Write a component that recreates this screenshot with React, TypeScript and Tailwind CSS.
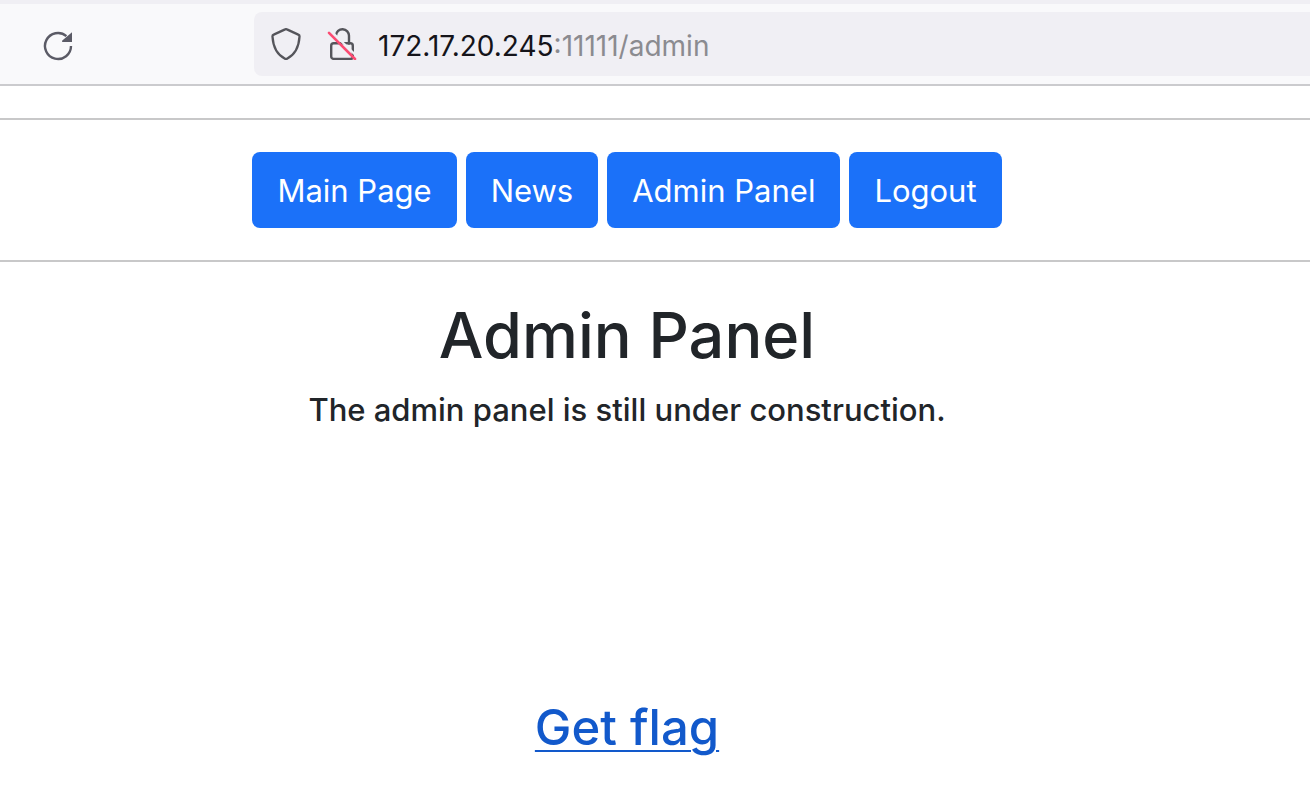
import type { ReactNode } from 'react'

const links = [
  { label: 'Main Page', href: '#main' },
  { label: 'News', href: '#news' },
  { label: 'Admin Panel', href: '#admin' },
  { label: 'Logout', href: '#logout' },
]

function Icon({ children }: { children: ReactNode }) {
  return (
    <svg viewBox="0 0 32 32" className="size-8 shrink-0" fill="none" strokeLinecap="round" strokeLinejoin="round" aria-hidden="true">
      {children}
    </svg>
  )
}

function ReloadIcon() {
  return (
    <Icon>
      <path d="M29 16a13 13 0 1 1-4.600-9.900" stroke="#5b5b66" strokeWidth="2.400" strokeLinecap="butt" />
      <path d="M30 2.300V12h-9.200a.8.8 0 0 1-.5-1.400z" fill="#5b5b66" />
    </Icon>
  )
}

function ShieldIcon() {
  return (
    <Icon>
      <path
        d="M15.100 1.400a2 2 0 0 1 1.800 0l11.400 5.200a2 2 0 0 1 1.200 2.100C28.900 18.500 25.500 26.300 17 30.700a2 2 0 0 1-2 0C6.500 26.300 3.100 18.500 2.500 8.700a2 2 0 0 1 1.200-2.100z"
        stroke="#55555b"
        strokeWidth="2.300"
      />
    </Icon>
  )
}

function InsecureIcon() {
  return (
    <Icon>
      <path d="M10 7.500a6.500 6.500 0 0 1 13 .5v7.500" stroke="#55555b" strokeWidth="2.400" />
      <rect x="5.200" y="15.200" width="21.600" height="15.700" rx="2.500" stroke="#55555b" strokeWidth="2.400" />
      <path d="M5 3 L31 28.500" stroke="#f0eff4" strokeWidth="2.400" strokeLinecap="butt" />
      <path d="M3 4.800 L29 31" stroke="#fb4b72" strokeWidth="2.600" />
    </Icon>
  )
}

function Toolbar() {
  return (
    <header className="flex border-t-4 border-b-2 border-t-[#f0eff4] border-b-[#cbcbce] bg-[#f9f9fb] py-2">
      <div className="flex w-[254px] shrink-0 items-center pt-1 pl-[42px]">
        <button type="button" aria-label="Reload">
          <ReloadIcon />
        </button>
      </div>
      <div className="flex h-16 min-w-0 flex-1 items-center rounded-l-lg bg-[#f0eff4] pl-4">
        <button type="button" aria-label="Tracking protection">
          <ShieldIcon />
        </button>
        <button type="button" aria-label="Connection is not secure" className="ml-6">
          <InsecureIcon />
        </button>
        <div
          role="textbox"
          aria-label="Address"
          contentEditable
          suppressContentEditableWarning
          className="ml-5 flex-1 pt-1 text-[28px] leading-8 whitespace-nowrap text-[#15141a] outline-none"
        >
          172.17.20.245<span className="text-[#8b8b90]">:11111/admin</span>
        </div>
      </div>
    </header>
  )
}

export default function App() {
  return (
    <div className="min-h-screen bg-white font-['Inter',sans-serif] text-[#212529]">
      <Toolbar />
      <nav className="mt-8 flex justify-center gap-[9px] border-y-2 border-[#c8c8c9] py-8 pr-14">
        {links.map(link => (
          <a
            key={link.label}
            href={link.href}
            className="rounded-lg bg-[#1b71f9] px-[25px] pt-[15px] pb-[13px] text-[31px] leading-12 whitespace-nowrap text-white"
          >
            {link.label}
          </a>
        ))}
      </nav>
      <main className="flex flex-col items-center pt-[33px] pr-14 text-center font-medium">
        <h1 className="text-[63px] leading-20">Admin Panel</h1>
        <p className="mt-[15px] text-[31px] leading-10">The admin panel is still under construction.</p>
        <a href="#flag" className="mt-[268px] text-[49px] leading-15 text-[#1259cb] underline decoration-2 underline-offset-[5px]">
          Get flag
        </a>
      </main>
    </div>
  )
}
